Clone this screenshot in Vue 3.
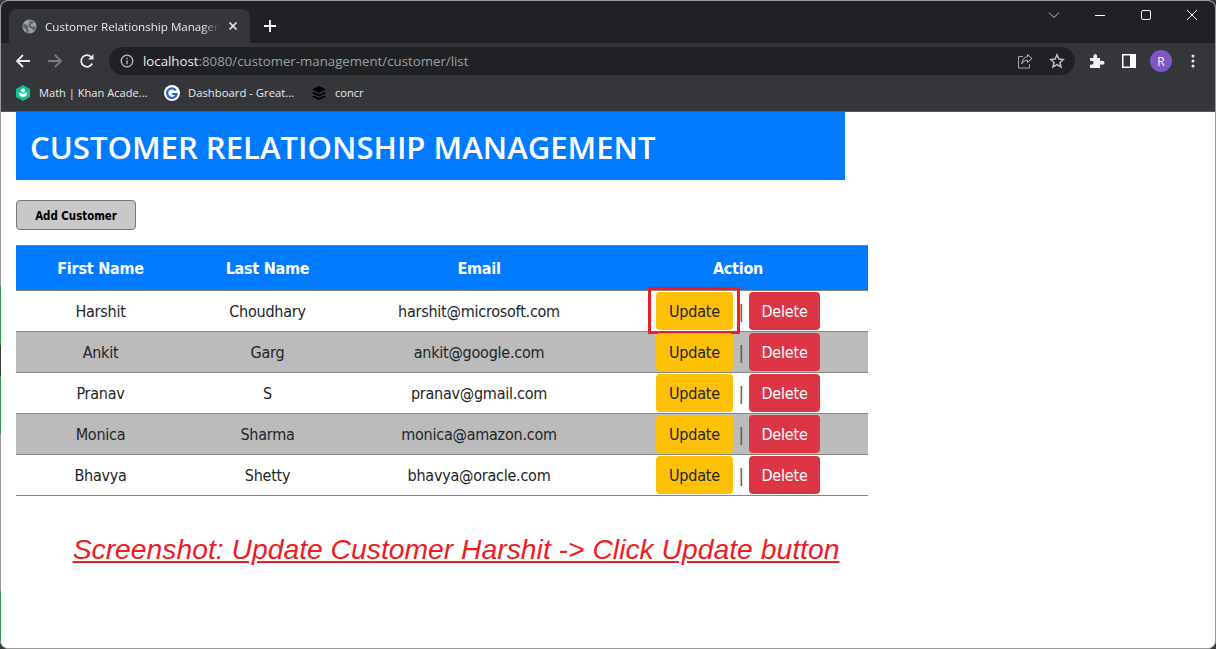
<template>
  <div class="screen">
    <div class="window">
      <div class="titlebar">
        <div class="tab">
          <svg class="favicon" viewBox="0 0 16 16">
            <circle cx="8" cy="8" r="7.500" fill="#9aa0a6" />
            <path d="M2 5l3 1 2 2-1 2 1 2v3l-2-1-1-3-3-3zM8 1.500l3 .5 2 2-3 1-1 2 2 1h4l-1 3-2 2-1-3-3-1-1-3 1-2z" fill="#5f6368" />
          </svg>
          <span class="tab-title">Customer Relationship Management</span>
          <svg class="tab-close" viewBox="0 0 10 10">
            <path d="M1.500 1.500l7 7M8.500 1.500l-7 7" stroke="#e8eaed" stroke-width="1.700" />
          </svg>
        </div>
        <svg class="new-tab" viewBox="0 0 14 14">
          <path d="M7 1v12M1 7h12" stroke="#fff" stroke-width="1.800" />
        </svg>
        <div class="win-controls">
          <div class="win-btn">
            <svg width="12" height="12" viewBox="0 0 12 12"><path d="M1 3.500l5 5 5-5" fill="none" stroke="#c4c7c5" /></svg>
          </div>
          <div class="win-btn">
            <svg width="12" height="12" viewBox="0 0 12 12"><path d="M1 6.500h10" stroke="#fff" /></svg>
          </div>
          <div class="win-btn">
            <svg width="12" height="12" viewBox="0 0 12 12"><rect x="1.500" y="1.500" width="9" height="9" rx="1.500" fill="none" stroke="#fff" /></svg>
          </div>
          <div class="win-btn">
            <svg width="12" height="12" viewBox="0 0 12 12"><path d="M1 1l10 10M11 1L1 11" stroke="#fff" /></svg>
          </div>
        </div>
      </div>

      <div class="toolbar">
        <div class="nav-btn">
          <svg width="16" height="16" viewBox="0 0 16 16"><path d="M15 8H2M8 2L2 8l6 6" fill="none" stroke="#e8eaed" stroke-width="1.800" /></svg>
        </div>
        <div class="nav-btn">
          <svg width="16" height="16" viewBox="0 0 16 16"><path d="M1 8h13M8 2l6 6-6 6" fill="none" stroke="#7a7d80" stroke-width="1.800" /></svg>
        </div>
        <div class="nav-btn">
          <svg width="16" height="16" viewBox="0 0 16 16">
            <path d="M13.200 10.500A5.800 5.800 0 1 1 12.200 4" fill="none" stroke="#e8eaed" stroke-width="1.800" />
            <path d="M14.500 1v5.500H9z" fill="#e8eaed" />
          </svg>
        </div>
        <div class="omnibox">
          <svg class="info" width="14" height="14" viewBox="0 0 14 14">
            <circle cx="7" cy="7" r="5.800" fill="none" stroke="#bdc1c6" stroke-width="1.300" />
            <path d="M7 6.200v4M7 3.800v1.200" stroke="#bdc1c6" stroke-width="1.300" />
          </svg>
          <span class="url"><span class="host">localhost</span>:8080/customer-management/customer/list</span>
          <svg class="share" width="16" height="16" viewBox="0 0 16 16">
            <path d="M6 3.500H1.500V15h11v-4" fill="none" stroke="#a4a8ac" />
            <path d="M10.500 1.500L15 5.500l-4.500 4V7.300C7.800 7.300 6 8.500 4.800 10.800 5 7 7.200 4 10.500 3.700z" fill="none" stroke="#bdc1c6" />
          </svg>
          <svg class="star" width="16" height="16" viewBox="0 0 16 16">
            <path d="M8 1.800l1.900 4.200 4.500.5-3.400 3 1 4.500L8 11.700 4 14l1-4.500-3.400-3 4.500-.5z" fill="none" stroke="#bdc1c6" stroke-width="1.500" />
          </svg>
        </div>
        <div class="nav-btn ext">
          <svg width="16" height="16" viewBox="0 0 16 16">
            <path d="M1 5h3.500C4 2.500 5 1 6.300 1s2.300 1.500 1.800 4H11v3c2.800-.7 4.500.3 4.500 1.800S13.800 12.300 11 11.500V15H1v-3.500c2.300.6 3.600-.3 3.600-1.700S3.300 7.400 1 8z" fill="#f1f3f4" />
          </svg>
        </div>
        <div class="nav-btn">
          <svg width="14" height="14" viewBox="0 0 14 14">
            <rect width="14" height="14" fill="#fff" />
            <rect x="1.500" y="1.500" width="6.500" height="11" fill="#35363a" />
          </svg>
        </div>
        <div class="nav-btn">
          <div class="avatar">R</div>
        </div>
        <div class="nav-btn">
          <svg width="4" height="14" viewBox="0 0 4 14">
            <circle cx="2" cy="2" r="1.500" fill="#e8eaed" />
            <circle cx="2" cy="7" r="1.500" fill="#e8eaed" />
            <circle cx="2" cy="12" r="1.500" fill="#e8eaed" />
          </svg>
        </div>
      </div>

      <div class="bookmarks">
        <div class="bookmark mark-one">
          <svg width="16" height="16" viewBox="0 0 16 16">
            <path d="M8 0l7 4v8l-7 4-7-4V4z" fill="#14bf96" />
            <circle cx="8" cy="5.500" r="2" fill="#fff" />
            <path d="M3.800 7.500c0 3 2 4.500 4.200 4.700 2.200-.2 4.200-1.700 4.200-4.700-2 0-3.400.6-4.200 1.800-.8-1.200-2.200-1.800-4.200-1.800z" fill="#fff" />
          </svg>
          <span>Math | Khan Acade...</span>
        </div>
        <div class="bookmark mark-two">
          <svg width="16" height="16" viewBox="0 0 16 16">
            <circle cx="8" cy="8" r="8" fill="#fff" />
            <path d="M11.800 5.300A4.800 4.800 0 1 0 12.600 9H8.300" fill="none" stroke="#2a62d6" stroke-width="2.200" />
          </svg>
          <span>Dashboard - Great...</span>
        </div>
        <div class="bookmark mark-three">
          <svg width="14" height="14" viewBox="0 0 14 14">
            <path d="M7 0l7 3.500L7 7 0 3.500z" fill="#000" />
            <path d="M1.500 6L0 7l7 3.500L14 7l-1.500-1L7 8.500z" fill="#000" />
            <path d="M1.500 9.500L0 10.500 7 14l7-3.500-1.500-1L7 12z" fill="#000" />
          </svg>
          <span>concr</span>
        </div>
      </div>

      <div class="page">
        <header class="banner">
          <h1>CUSTOMER RELATIONSHIP MANAGEMENT</h1>
        </header>

        <button class="add-btn">Add Customer</button>

        <table class="customers">
          <thead>
            <tr>
              <th class="col-first">First Name</th>
              <th class="col-last">Last Name</th>
              <th class="col-email">Email</th>
              <th>Action</th>
            </tr>
          </thead>
          <tbody>
            <tr v-for="(c, i) in customers" :key="c.email">
              <td>{{ c.first }}</td>
              <td>{{ c.last }}</td>
              <td>{{ c.email }}</td>
              <td>
                <div class="actions">
                  <span class="update-wrap">
                    <button class="btn update">Update</button>
                    <span v-if="i === 0" class="highlight"></span>
                  </span>
                  <span class="sep">|</span>
                  <button class="btn delete">Delete</button>
                </div>
              </td>
            </tr>
          </tbody>
        </table>

        <p class="caption">Screenshot: Update Customer Harshit -&gt; Click Update button</p>
      </div>
    </div>
    <span class="edge edge-top"></span>
    <span class="edge edge-bottom"></span>
  </div>
</template>

<script setup>
const customers = [
  { first: 'Harshit', last: 'Choudhary', email: 'harshit@microsoft.com' },
  { first: 'Ankit', last: 'Garg', email: 'ankit@google.com' },
  { first: 'Pranav', last: 'S', email: 'pranav@gmail.com' },
  { first: 'Monica', last: 'Sharma', email: 'monica@amazon.com' },
  { first: 'Bhavya', last: 'Shetty', email: 'bhavya@oracle.com' },
]
</script>

<style>
html,
body {
  margin: 0;
  background: #3a3a3a;
}
</style>

<style scoped>
.screen {
  position: relative;
  width: 1216px;
  height: 649px;
  overflow: hidden;
}

/* desktop showing through at the left edge of the window */
.edge {
  position: absolute;
  left: 0;
  width: 1px;
  background: #2e9e4f;
}

.edge-top {
  top: 286px;
  height: 148px;
  background: linear-gradient(#2e9e4f 40%, #3c3c3c 40%, #3c3c3c 61%, #2e9e4f 61%);
}

.edge-bottom {
  top: 591px;
  height: 50px;
}

.window {
  width: 1216px;
  height: 649px;
  box-sizing: border-box;
  border: 1px solid #9a9a9a;
  border-radius: 8px;
  overflow: hidden;
  background: #fff;
  font-family: "DejaVu Sans", "Noto Sans", sans-serif;
  font-stretch: condensed;
}

.titlebar {
  height: 42px;
  background: #202124;
  display: flex;
  align-items: flex-end;
}

.tab {
  width: 241px;
  height: 34px;
  margin-left: 8px;
  background: #35363a;
  border-radius: 8px 8px 0 0;
  display: flex;
  align-items: center;
  box-sizing: border-box;
  padding-left: 13px;
}

.favicon {
  width: 15px;
  height: 15px;
  flex-shrink: 0;
}

.tab-title {
  margin-left: 8px;
  width: 175px;
  overflow: hidden;
  white-space: nowrap;
  font-family: "Open Sans", sans-serif;
  font-stretch: normal;
  font-size: 11.600px;
  color: #e8eaed;
  -webkit-mask-image: linear-gradient(to right, #000 90%, transparent);
  mask-image: linear-gradient(to right, #000 90%, transparent);
}

.tab-close {
  width: 10px;
  height: 10px;
  margin-left: 8px;
}

.new-tab {
  width: 14px;
  height: 14px;
  margin-left: 13px;
  margin-bottom: 10px;
}

.win-controls {
  margin-left: auto;
  align-self: flex-start;
  display: flex;
}

.win-btn {
  width: 46px;
  height: 28px;
  display: flex;
  align-items: center;
  justify-content: center;
}

.toolbar {
  height: 36px;
  background: #35363a;
  display: flex;
  align-items: center;
  padding: 0 6px;
}

.nav-btn {
  width: 32px;
  height: 32px;
  flex-shrink: 0;
  display: flex;
  align-items: center;
  justify-content: center;
}

.omnibox {
  width: 966px;
  height: 28px;
  margin: 0 6px 0 6px;
  flex-shrink: 0;
  border-radius: 14px;
  background: #202124;
  display: flex;
  align-items: center;
  padding: 0 10px 0 11px;
  box-sizing: border-box;
}

.url {
  margin-left: 9px;
  font-family: "Open Sans", sans-serif;
  font-stretch: normal;
  font-size: 13.250px;
  color: #9aa0a6;
}

.host {
  color: #e8eaed;
}

.share {
  margin-left: auto;
}

.star {
  margin-left: 16px;
}

.avatar {
  width: 22px;
  height: 22px;
  border-radius: 50%;
  background: #7e57c2;
  color: #fff;
  font-family: "Open Sans", sans-serif;
  font-stretch: normal;
  font-size: 12px;
  display: flex;
  align-items: center;
  justify-content: center;
}

.bookmarks {
  height: 33px;
  background: #35363a;
  border-bottom: 1px solid #55575b;
  box-sizing: border-box;
  padding-bottom: 4px;
  display: flex;
  align-items: center;
}

.bookmark {
  display: flex;
  align-items: center;
  font-family: "Open Sans", sans-serif;
  font-stretch: normal;
  font-size: 11.100px;
  color: #e8eaed;
}

.bookmark span {
  margin-top: -2px;
}

.bookmark svg {
  margin-right: 8px;
}

.mark-one {
  margin-left: 14px;
  width: 149px;
}

.mark-two {
  width: 148px;
  font-size: 11.300px;
}

.mark-three svg {
  margin-right: 9px;
}

.page {
  padding: 0 15px;
}

.banner {
  width: 829px;
  height: 68px;
  background: #007bff;
  display: flex;
  align-items: center;
  padding: 2px 0 0 14px;
  box-sizing: border-box;
}

.banner h1 {
  margin: 0;
  font-family: "Open Sans", sans-serif;
  font-stretch: normal;
  font-size: 31.100px;
  font-weight: 600;
  color: #fff;
  white-space: nowrap;
}

.add-btn {
  display: block;
  width: 120px;
  height: 30px;
  margin-top: 20px;
  padding: 1px 0 0;
  border: 1px solid #767676;
  border-radius: 4px;
  background: #c8c8c8;
  color: #000;
  font-family: inherit;
  font-stretch: condensed;
  font-size: 11.400px;
  font-weight: 700;
}

.customers {
  width: 852px;
  margin-top: 15px;
  border-collapse: collapse;
  table-layout: fixed;
  color: #212529;
  font-size: 16px;
  letter-spacing: -0.240px;
  text-align: center;
}

.customers thead tr {
  height: 45px;
  background: #007bff;
  color: #fff;
  border-top: 1px solid #888;
  border-bottom: 1px solid #888;
}

.customers th {
  padding: 0;
  font-weight: 700;
}

.col-first {
  width: 169px;
}

.col-last {
  width: 165px;
}

.col-email {
  width: 258px;
}

.customers tbody tr {
  height: 41px;
  border-bottom: 1px solid #888;
}

.customers tbody tr:nth-child(even) {
  background: #bbb;
}

.customers td {
  padding: 0;
}

.actions {
  display: flex;
  align-items: center;
  justify-content: center;
  margin-left: 48px;
  width: 164px;
}

.update-wrap {
  position: relative;
  display: flex;
}

.sep {
  width: 16px;
  flex-shrink: 0;
  font-size: 18px;
  color: #4a5560;
}

.btn {
  height: 38px;
  padding: 0;
  border: none;
  border-radius: 4px;
  font-family: inherit;
  font-stretch: condensed;
  font-size: 16px;
  letter-spacing: -0.200px;
}

.update {
  width: 77px;
  background: #ffc107;
  color: #212529;
}

.delete {
  width: 71px;
  background: #dc3545;
  color: #fff;
}

.highlight {
  position: absolute;
  left: -8px;
  right: -7px;
  top: -5px;
  bottom: -4px;
  border: 3px solid #ee1c25;
  pointer-events: none;
}

.caption {
  width: 880px;
  margin: 37px 0 0;
  text-align: center;
  font-family: "Liberation Sans", Arial, sans-serif;
  font-stretch: normal;
  font-size: 28.300px;
  font-style: italic;
  text-decoration: underline;
  color: #ee1c25;
}
</style>
